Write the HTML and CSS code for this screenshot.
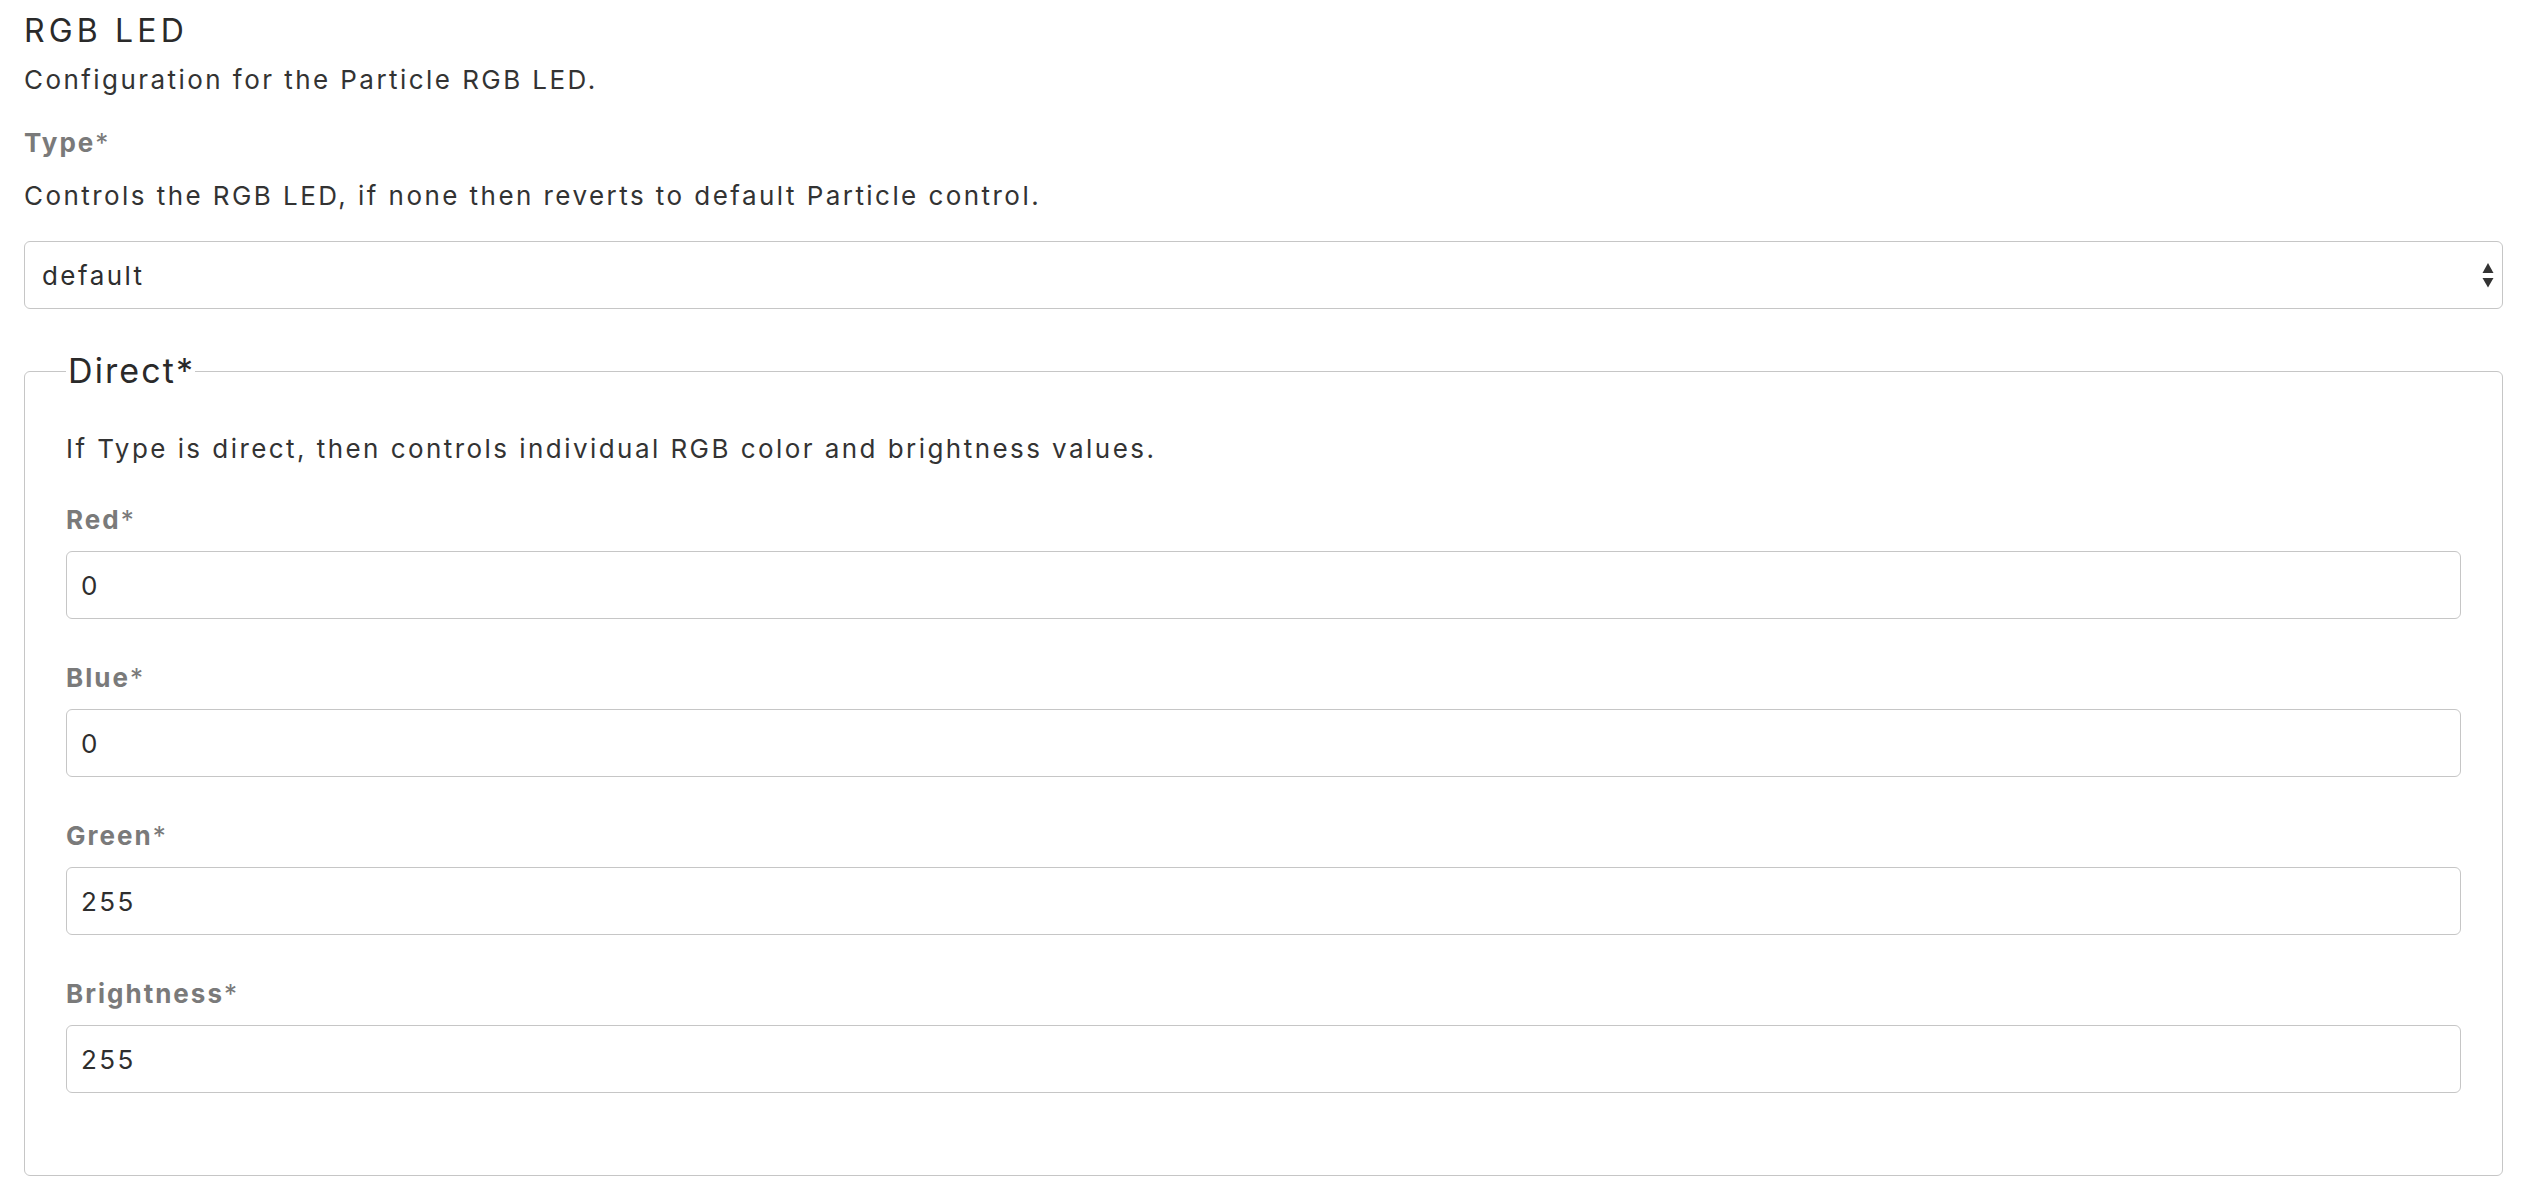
FILE: index.html
```html
<!DOCTYPE html>
<html lang="en">
<head>
<meta charset="utf-8">
<title>RGB LED</title>
<link rel="stylesheet" href="styles.css">
</head>
<body>
<form class="config">
  <h2 class="title">RGB LED</h2>
  <p class="desc desc-top">Configuration for the Particle RGB LED.</p>

  <label class="field-label type-label" for="type">Type<span class="req">*</span></label>
  <p class="desc help">Controls the RGB LED, if none then reverts to default Particle control.</p>
  <div class="select-wrap">
    <select id="type" class="control select">
      <option>default</option>
      <option>none</option>
      <option>direct</option>
    </select>
    <svg class="select-arrow" width="12" height="25" viewBox="0 0 12 25" aria-hidden="true">
      <path d="M6 0 L11.5 10 L0.5 10 Z" fill="#333"/>
      <path d="M0.5 15 L11.5 15 L6 24.5 Z" fill="#333"/>
    </svg>
  </div>

  <fieldset class="group">
    <legend class="legend">Direct<span class="req">*</span></legend>
    <p class="desc group-desc">If Type is direct, then controls individual RGB color and brightness values.</p>

    <div class="form-item">
      <label class="field-label" for="red">Red<span class="req">*</span></label>
      <input id="red" class="control" type="text" value="0">
    </div>
    <div class="form-item">
      <label class="field-label" for="blue">Blue<span class="req">*</span></label>
      <input id="blue" class="control" type="text" value="0">
    </div>
    <div class="form-item">
      <label class="field-label" for="green">Green<span class="req">*</span></label>
      <input id="green" class="control" type="text" value="255">
    </div>
    <div class="form-item">
      <label class="field-label" for="brightness">Brightness<span class="req">*</span></label>
      <input id="brightness" class="control" type="text" value="255">
    </div>
  </fieldset>
</form>
</body>
</html>
```
FILE: styles.css
```css
* { box-sizing: border-box; }

html, body {
  margin: 0;
  background: #ffffff;
}

body {
  padding: 11px 27px 0 24px;
  font-family: Inter, "Liberation Sans", sans-serif;
  font-size: 26px;
  line-height: 36px;
  letter-spacing: 0.094em;
  color: #333333;
}

.config {
  display: flex;
  flex-direction: column;
}

.title {
  margin: 0;
  font-size: 32px;
  line-height: 40px;
  font-weight: 400;
  letter-spacing: 0.13em;
  color: #2a2a2a;
}

.desc {
  margin: 0;
}

.desc-top {
  margin-top: 11px;
}

.field-label {
  display: block;
  font-weight: 700;
  color: #7a7a7a;
  letter-spacing: 0.077em;
}

.req {
  font-weight: 400;
  letter-spacing: 0;
  line-height: 1;
}

.type-label {
  margin-top: 27px;
}

.help {
  margin-top: 17px;
}

.select-wrap {
  position: relative;
  margin-top: 27px;
}

.control {
  display: block;
  width: 100%;
  height: 68px;
  margin: 0;
  padding: 0 14px;
  border: 1px solid #c6c6c6;
  border-radius: 6px;
  background: #ffffff;
  font-family: inherit;
  font-size: 26px;
  letter-spacing: 0.094em;
  color: #2e2e2e;
  outline: none;
}

.select {
  -webkit-appearance: none;
  appearance: none;
  padding-left: 17px;
}

.select-arrow {
  position: absolute;
  right: 9px;
  top: 22px;
}

.group {
  margin: 42px 0 0 0;
  padding: 0 41px 82px 41px;
  border: 1px solid #c6c6c6;
  border-radius: 6px;
  min-width: 0;
}

.legend {
  padding: 0 2px;
  font-size: 34px;
  line-height: 40px;
  letter-spacing: 0.062em;
  color: #2a2a2a;
}

.legend .req {
  color: #2a2a2a;
}

.group-desc {
  margin-top: 40px;
}

.form-item {
  margin-top: 35px;
}

.form-item + .form-item {
  margin-top: 41px;
}

.form-item .field-label {
  margin-bottom: 13px;
}
```
